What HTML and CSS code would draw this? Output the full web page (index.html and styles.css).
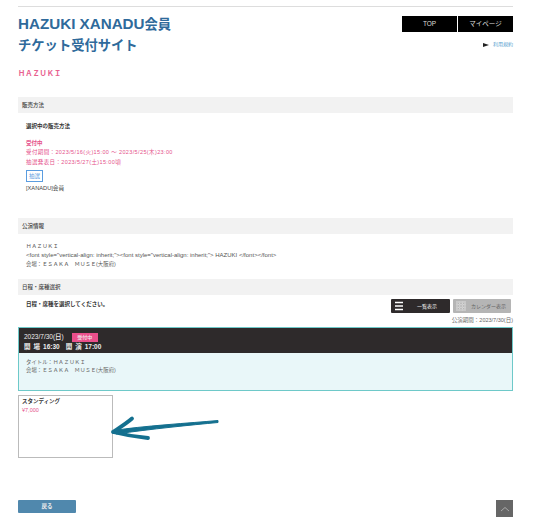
FILE: index.html
```html
<!DOCTYPE html>
<html lang="ja">

<head>
  <meta charset="UTF-8">
  <meta name="viewport" content="width=device-width, initial-scale=1.0">
  <title>HAZUKI XANADU会員 チケット受付サイト</title>
  <link rel="stylesheet" href="styles.css">
</head>

<body>
  <div class="container">
    <header class="site-header">
      <h1 class="site-title">HAZUKI XANADU<span class="site-title-sub">会員</span><br><span class="site-title-sub">チケット受付サイト</span></h1>
      <div class="header-side">
        <nav class="nav-buttons">
          <a class="nav-button">TOP</a>
          <a class="nav-button">マイページ</a>
        </nav>
        <div class="terms"><span class="terms-mark"></span><a class="terms-link">利用規約</a></div>
      </div>
    </header>

    <p class="event-name">ＨＡＺＵＫＩ</p>

    <h2 class="section-bar">販売方法</h2>
    <div class="sale">
      <h3 class="sale-title">選択中の販売方法</h3>
      <p class="sale-status">受付中</p>
      <p class="sale-date">受付期間：2023/5/16(火)15:00 ～ 2023/5/25(木)23:00</p>
      <p class="sale-date">抽選発表日：2023/5/27(土)15:00頃</p>
      <span class="lottery-tag">抽選</span>
      <p class="sale-member">[XANADU]会員</p>
    </div>

    <h2 class="section-bar">公演情報</h2>
    <div class="info">
      <p class="full-width">ＨＡＺＵＫＩ</p>
      <p class="info-raw">&lt;font style="vertical-align: inherit;"&gt;&lt;font style="vertical-align: inherit;"&gt; HAZUKI &lt;/font&gt;&lt;/font&gt;</p>
      <p class="full-width">会場：ＥＳＡＫＡ　ＭＵＳＥ(大阪府)</p>
    </div>

    <h2 class="section-bar">日程・席種選択</h2>
    <div class="select-row">
      <p class="select-note">日程・席種を選択してください。</p>
      <div class="view-switch">
        <a class="view-button view-list">
          <svg class="view-icon" viewBox="0 0 10 10" width="10" height="10">
            <path d="M1 1.500h8M1 5h8M1 8.500h8" stroke="#fff" stroke-width="1.600" />
          </svg>
          <span>一覧表示</span>
        </a>
        <a class="view-button view-calendar">
          <svg class="view-icon" viewBox="0 0 10 10" width="10" height="10">
            <path d="M.5 1h9M.5 3.700h9M.5 6.300h9M.5 9h9M1 .5v9M3.700 .5v9M6.300 .5v9M9 .5v9" stroke="#eee" stroke-width=".8" stroke-dasharray="1 .6" />
          </svg>
          <span>カレンダー表示</span>
        </a>
      </div>
    </div>
    <p class="period">公演期間：2023/7/30(日)</p>

    <div class="show-card">
      <div class="show-head">
        <p class="show-date">2023/7/30(日)<span class="show-badge">受付中</span></p>
        <p class="show-time">開 場 16:30&nbsp; 開 演 17:00</p>
      </div>
      <div class="show-body">
        <p class="full-width">タイトル：ＨＡＺＵＫＩ</p>
        <p class="full-width">会場：ＥＳＡＫＡ　ＭＵＳＥ(大阪府)</p>
      </div>
    </div>

    <div class="ticket">
      <p class="ticket-name">スタンディング</p>
      <p class="ticket-price">¥7,000</p>
    </div>

    <a class="back-button">戻る</a>
  </div>

  <svg class="arrow" viewBox="0 0 110 24" width="110" height="24">
    <path d="M3 13.500C30 9 80 6 107 3.500L107 5.500C80 8 40 12 5 17Z" fill="#14708f" stroke="#14708f" stroke-linejoin="round" />
    <path d="M2 15C8 11 16 6 21 1.500M2 15C14 18 26 20 37 21" fill="none" stroke="#14708f" stroke-width="3.800" stroke-linecap="round" />
  </svg>

  <a class="page-top">
    <svg viewBox="0 0 16 16" width="16" height="16">
      <path d="M4 10 8 6.500 12 10" fill="none" stroke="#aaa" stroke-width="1" />
    </svg>
  </a>
</body>

</html>
```

FILE: styles.css
```css
html,
body {
  margin: 0;
  padding: 0;
}

body {
  position: relative;
  height: 527px;
  overflow: hidden;
  background-color: #fff;
  font-family: "Liberation Sans", "Noto Sans CJK JP", sans-serif;
  font-size: 5.500px;
  line-height: 9px;
  color: #444;
}

p,
h1,
h2,
h3 {
  margin: 0;
}

.container {
  width: 495px;
  margin-left: 18px;
  padding-top: 6px;
}

.site-header {
  display: flex;
  justify-content: space-between;
  border-top: 1px solid #ddd;
  padding-top: 7px;
}

.site-title {
  font-size: 15.200px;
  line-height: 20px;
  font-weight: 700;
  color: #2f6a9b;
}

.site-title-sub {
  font-size: 13.300px;
}

.header-side {
  width: 111px;
  margin-top: 2px;
}

.nav-buttons {
  display: flex;
  justify-content: space-between;
}

.nav-button {
  width: 55px;
  height: 16px;
  background-color: #000;
  color: #ddd;
  font-size: 6.500px;
  line-height: 15px;
  text-align: center;
}

.terms {
  display: flex;
  justify-content: flex-end;
  align-items: center;
  margin-top: 8px;
  color: #5ba4cf;
  font-size: 5px;
}

.terms-mark {
  width: 0;
  height: 0;
  margin-right: 4px;
  border-left: 6px solid #222;
  border-top: 2px solid transparent;
  border-bottom: 2px solid transparent;
}

.event-name {
  margin-top: 13px;
  font-size: 7.200px;
  line-height: 10px;
  font-weight: 700;
  color: #e8608f;
}

.section-bar {
  height: 16px;
  padding-left: 4px;
  background-color: #f2f2f2;
  font-size: 5.500px;
  line-height: 16px;
  font-weight: 500;
  color: #444;
}

.event-name + .section-bar {
  margin-top: 18px;
}

.sale {
  height: 105px;
  padding: 9px 0 0 8px;
  box-sizing: border-box;
}

.sale-title {
  font-size: 5.500px;
  line-height: 9px;
  font-weight: 700;
  color: #333;
}

.sale-status {
  margin-top: 8px;
  font-weight: 700;
  color: #e5508a;
}

.sale-date {
  color: #e5508a;
  letter-spacing: .38px;
  line-height: 9.500px;
}

.lottery-tag {
  display: block;
  width: 15px;
  margin-top: 3px;
  border: 1px solid #5b9de0;
  text-align: center;
  line-height: 10px;
  color: #5b9de0;
}

.sale-member {
  margin-top: 2px;
  font-size: 5.700px;
}

.info {
  height: 45px;
  padding: 8px 0 0 8px;
  box-sizing: border-box;
  color: #555;
}

.full-width {
  font-size: 5.400px;
}

.info-raw {
  font-size: 6px;
}

.select-row {
  display: flex;
  justify-content: space-between;
  align-items: flex-start;
  padding: 4px 2px 0 8px;
}

.select-note {
  margin-top: 1px;
  font-weight: 700;
  color: #333;
}

.view-switch {
  display: flex;
  gap: 3px;
  margin-top: 0;
}

.view-button {
  display: flex;
  align-items: center;
  height: 14px;
  padding-left: 3px;
  border-radius: 1px;
  box-sizing: border-box;
  font-size: 5px;
}

.view-button span {
  flex: 1;
  text-align: center;
}

.view-list {
  width: 59px;
  background-color: #2e2a2b;
  color: #eee;
}

.view-calendar {
  width: 58px;
  background-color: #b5b5b5;
  color: #666;
}

.period {
  margin-top: 3px;
  text-align: right;
  font-size: 5.500px;
  color: #666;
}

.show-card {
  margin-top: 2px;
  border: 1px solid #6ec9c9;
  background-color: #e9f7f9;
}

.show-head {
  height: 25px;
  padding: 4px 0 0 5px;
  box-sizing: border-box;
  background-color: #2e2a2b;
  color: #eee;
  font-size: 6.500px;
  line-height: 9px;
  font-weight: 500;
}

.show-time {
  font-weight: 700;
  word-spacing: 1.200px;
}

.show-badge {
  display: inline-block;
  width: 26px;
  margin-left: 8px;
  background-color: #ea4f8b;
  font-size: 5px;
  text-align: center;
}

.show-body {
  height: 37px;
  padding: 5px 0 0 7px;
  box-sizing: border-box;
  color: #666;
  line-height: 8px;
}

.ticket {
  width: 95px;
  height: 63px;
  margin-top: 4px;
  padding: 1px 3px;
  box-sizing: border-box;
  border: 1px solid #bbb;
}

.ticket-name {
  font-weight: 700;
  color: #333;
}

.ticket-price {
  color: #e5508a;
}

.back-button {
  display: block;
  width: 58px;
  height: 13px;
  margin-top: 42px;
  border-radius: 1px;
  background-color: #5088ad;
  color: #eee;
  font-weight: 700;
  line-height: 13px;
  text-align: center;
}

.arrow {
  position: absolute;
  left: 111px;
  top: 417px;
  overflow: visible;
}

.page-top {
  position: absolute;
  left: 496px;
  top: 500px;
  display: flex;
  align-items: center;
  justify-content: center;
  width: 17px;
  height: 17px;
  background-color: #666;
}
```
